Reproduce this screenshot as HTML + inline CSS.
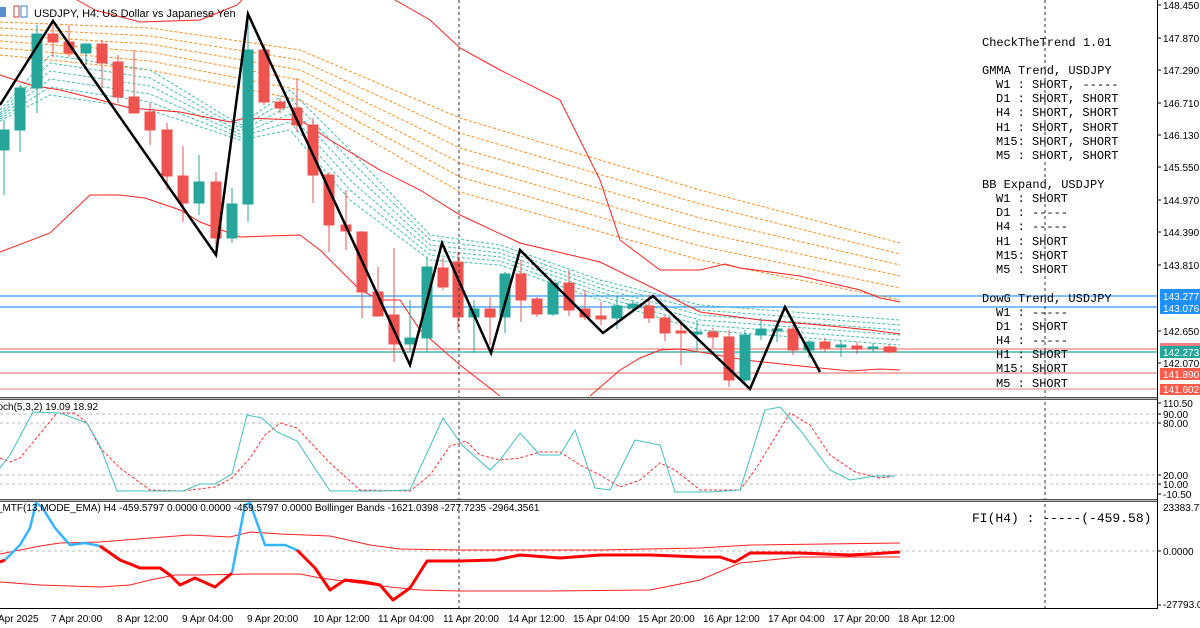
<!DOCTYPE html>
<html><head><meta charset="utf-8"><style>
html,body{margin:0;padding:0;background:#fff;width:1200px;height:628px;overflow:hidden}
svg{display:block}
.ax{font:10px "Liberation Sans",sans-serif;fill:#000}
.mono{font:12px "Liberation Mono",monospace;fill:#000}
</style></head><body>
<svg width="1200" height="628" viewBox="0 0 1200 628" xmlns="http://www.w3.org/2000/svg">
<rect width="1200" height="628" fill="#fff"/>
<line x1="0" y1="296" x2="1157" y2="296" stroke="#3399ff" stroke-width="1.2"/>
<line x1="0" y1="307" x2="1157" y2="307" stroke="#3399ff" stroke-width="1.2"/>
<line x1="0" y1="349" x2="1157" y2="349" stroke="#f08080" stroke-width="1.2"/>
<line x1="0" y1="352" x2="1157" y2="352" stroke="#26a69a" stroke-width="1.2"/>
<line x1="0" y1="373" x2="1157" y2="373" stroke="#f08080" stroke-width="1.2"/>
<line x1="0" y1="389" x2="1157" y2="389" stroke="#f4a6a0" stroke-width="1.5"/>
<g fill="none" stroke="#ff8c1a" stroke-width="1" stroke-dasharray="3,2">
<polyline points="0,22 150,28 300,50 460,118 700,190 900,243"/>
<polyline points="0,28 150,36 300,60 460,133 700,204 900,254"/>
<polyline points="0,35 150,44 300,70 460,148 700,218 900,265"/>
<polyline points="0,41 150,52 300,80 460,163 700,232 900,276"/>
<polyline points="0,48 150,61 300,90 460,177 700,246 900,288"/>
<polyline points="0,55 150,70 300,100 460,192 700,260 900,300"/>
</g>
<g fill="none" stroke="#3fbfb0" stroke-width="1" stroke-dasharray="3,2">
<polyline points="0,110 50,55 150,70 240,125 290,90 350,150 430,235 500,245 600,280 700,305 900,320"/>
<polyline points="0,113 50,63 150,78 240,128 290,98 350,160 430,240 500,249 600,284 700,310 900,325"/>
<polyline points="0,115 50,71 150,86 240,131 290,106 350,170 430,245 500,253 600,288 700,315 900,330"/>
<polyline points="0,117 50,79 150,94 240,134 290,114 350,180 430,250 500,257 600,292 700,320 900,335"/>
<polyline points="0,119 50,87 150,102 240,137 290,122 350,190 430,255 500,261 600,296 700,325 900,340"/>
<polyline points="0,121 50,95 150,110 240,140 290,130 350,200 430,260 500,265 600,300 700,330 900,345"/>
</g>
<g fill="none" stroke="#ff2020" stroke-width="1">
<polyline points="77,0 95,10 140,22 200,20 237,5 242,0"/>
<polyline points="395,0 430,20 460,48 500,70 560,100 600,180 620,240 660,270 700,270 725,264 740,268 800,276 860,290 880,298 900,302"/>
<polyline points="0,75 30,85 60,90 100,100 130,108 180,112 230,122 245,118 300,120 330,140 380,170 420,190 460,215 520,243 600,262 657,290 700,312 760,320 820,325 870,330 900,334"/>
<polyline points="0,252 50,233 90,195 120,195 145,198 180,210 200,222 240,237 300,235 320,250 360,290 380,300 400,300 420,330 460,365 500,396"/>
<polyline points="590,396 620,370 640,358 660,350 680,349 700,352 745,360 800,366 850,371 880,369 900,370"/>
</g>
<g stroke-width="1">
<g stroke="#26a69a" fill="#26a69a">
<line x1="4" y1="120" x2="4" y2="195"/><rect x="-1" y="130" width="10" height="20"/>
<line x1="20" y1="85" x2="20" y2="152"/><rect x="15" y="88" width="10" height="42"/>
<line x1="37" y1="25" x2="37" y2="113"/><rect x="32" y="34" width="10" height="54"/>
<line x1="86" y1="44" x2="86" y2="65"/><rect x="81" y="44" width="10" height="9"/>
<line x1="199" y1="155" x2="199" y2="215"/><rect x="194" y="182" width="10" height="21"/>
<line x1="232" y1="188" x2="232" y2="243"/><rect x="227" y="204" width="10" height="34"/>
<line x1="248" y1="14" x2="248" y2="222"/><rect x="243" y="50" width="10" height="154"/>
<line x1="410" y1="300" x2="410" y2="352"/><rect x="405" y="338" width="10" height="6"/>
<line x1="427" y1="257" x2="427" y2="352"/><rect x="422" y="267" width="10" height="71"/>
<line x1="474" y1="300" x2="474" y2="353"/><rect x="469" y="309" width="10" height="8"/>
<line x1="505" y1="272" x2="505" y2="333"/><rect x="500" y="274" width="10" height="43"/>
<line x1="553" y1="281" x2="553" y2="316"/><rect x="548" y="283" width="10" height="31"/>
<line x1="617" y1="296" x2="617" y2="329"/><rect x="612" y="306" width="10" height="12"/>
<line x1="633" y1="300" x2="633" y2="310"/><rect x="628" y="304" width="10" height="4"/>
<line x1="697" y1="320" x2="697" y2="352"/><rect x="692" y="332" width="10" height="2"/>
<line x1="745" y1="330" x2="745" y2="386"/><rect x="740" y="335" width="10" height="45"/>
<line x1="761" y1="318" x2="761" y2="340"/><rect x="756" y="329" width="10" height="6"/>
<line x1="777" y1="320" x2="777" y2="342"/><rect x="772" y="329" width="10" height="2"/>
<line x1="809" y1="340" x2="809" y2="358"/><rect x="804" y="342" width="10" height="8"/>
<line x1="841" y1="340" x2="841" y2="357"/><rect x="836" y="345" width="10" height="2"/>
<line x1="873" y1="343" x2="873" y2="352"/><rect x="868" y="347" width="10" height="1.5"/>
</g>
<g stroke="#ef5350" fill="#ef5350">
<line x1="53" y1="25" x2="53" y2="57"/><rect x="48" y="34" width="10" height="8"/>
<line x1="69" y1="25" x2="69" y2="57"/><rect x="64" y="42" width="10" height="11"/>
<line x1="102" y1="40" x2="102" y2="88"/><rect x="97" y="44" width="10" height="19"/>
<line x1="118" y1="55" x2="118" y2="103"/><rect x="113" y="62" width="10" height="35"/>
<line x1="134" y1="50" x2="134" y2="113"/><rect x="129" y="97" width="10" height="16"/>
<line x1="150" y1="103" x2="150" y2="145"/><rect x="145" y="112" width="10" height="18"/>
<line x1="167" y1="123" x2="167" y2="190"/><rect x="162" y="130" width="10" height="46"/>
<line x1="183" y1="146" x2="183" y2="222"/><rect x="178" y="176" width="10" height="27"/>
<line x1="216" y1="172" x2="216" y2="248"/><rect x="211" y="182" width="10" height="56"/>
<line x1="264" y1="45" x2="264" y2="105"/><rect x="259" y="50" width="10" height="52"/>
<line x1="280" y1="98" x2="280" y2="113"/><rect x="275" y="102" width="10" height="6"/>
<line x1="297" y1="78" x2="297" y2="132"/><rect x="292" y="108" width="10" height="17"/>
<line x1="313" y1="118" x2="313" y2="203"/><rect x="308" y="125" width="10" height="50"/>
<line x1="329" y1="172" x2="329" y2="252"/><rect x="324" y="175" width="10" height="50"/>
<line x1="346" y1="190" x2="346" y2="250"/><rect x="341" y="225" width="10" height="6"/>
<line x1="362" y1="231" x2="362" y2="318"/><rect x="357" y="232" width="10" height="60"/>
<line x1="378" y1="267" x2="378" y2="316"/><rect x="373" y="292" width="10" height="24"/>
<line x1="394" y1="248" x2="394" y2="362"/><rect x="389" y="315" width="10" height="29"/>
<line x1="443" y1="258" x2="443" y2="290"/><rect x="438" y="268" width="10" height="19"/>
<line x1="458" y1="252" x2="458" y2="330"/><rect x="453" y="262" width="10" height="55"/>
<line x1="490" y1="297" x2="490" y2="345"/><rect x="485" y="309" width="10" height="8"/>
<line x1="521" y1="260" x2="521" y2="322"/><rect x="516" y="274" width="10" height="26"/>
<line x1="537" y1="297" x2="537" y2="317"/><rect x="532" y="299" width="10" height="15"/>
<line x1="569" y1="270" x2="569" y2="316"/><rect x="564" y="283" width="10" height="27"/>
<line x1="585" y1="290" x2="585" y2="320"/><rect x="580" y="309" width="10" height="8"/>
<line x1="601" y1="302" x2="601" y2="325"/><rect x="596" y="316" width="10" height="3"/>
<line x1="649" y1="295" x2="649" y2="323"/><rect x="644" y="306" width="10" height="12"/>
<line x1="665" y1="315" x2="665" y2="341"/><rect x="660" y="318" width="10" height="15"/>
<line x1="681" y1="320" x2="681" y2="365"/><rect x="676" y="331" width="10" height="2"/>
<line x1="713" y1="328" x2="713" y2="348"/><rect x="708" y="332" width="10" height="5"/>
<line x1="729" y1="330" x2="729" y2="387"/><rect x="724" y="337" width="10" height="43"/>
<line x1="793" y1="325" x2="793" y2="355"/><rect x="788" y="329" width="10" height="21"/>
<line x1="825" y1="338" x2="825" y2="352"/><rect x="820" y="342" width="10" height="6"/>
<line x1="857" y1="342" x2="857" y2="354"/><rect x="852" y="346" width="10" height="3"/>
<line x1="889" y1="344" x2="889" y2="353"/><rect x="884" y="347" width="12" height="5"/>
</g>
</g>
<polyline points="0,105 53,21 216,255 248,14 410,365 442,243 491,353 520,250 603,333 653,296 750,389 785,307 820,372" fill="none" stroke="#000" stroke-width="2.5" stroke-linejoin="miter"/>
<rect x="0" y="7" width="6" height="10" fill="#5a8fd0"/>
<rect x="14" y="6" width="5" height="11" fill="none" stroke="#d04040"/>
<rect x="21" y="6" width="6" height="11" fill="none" stroke="#3a7fd0"/>
<text x="34" y="17" style="font:11px 'Liberation Sans',sans-serif" fill="#000">USDJPY, H4: US Dollar vs Japanese Yen</text>
<g class="mono">
<text x="982" y="46">CheckTheTrend 1.01</text>
<text x="982" y="74">GMMA Trend, USDJPY</text>
<text x="996" y="88">W1 : SHORT, -----</text>
<text x="996" y="102">D1 : SHORT, SHORT</text>
<text x="996" y="116">H4 : SHORT, SHORT</text>
<text x="996" y="131">H1 : SHORT, SHORT</text>
<text x="996" y="145">M15: SHORT, SHORT</text>
<text x="996" y="159">M5 : SHORT, SHORT</text>
<text x="982" y="188">BB Expand, USDJPY</text>
<text x="996" y="202">W1 : SHORT</text>
<text x="996" y="216">D1 : -----</text>
<text x="996" y="230">H4 : -----</text>
<text x="996" y="245">H1 : SHORT</text>
<text x="996" y="259">M15: SHORT</text>
<text x="996" y="273">M5 : SHORT</text>
<text x="982" y="302">DowG Trend, USDJPY</text>
<text x="996" y="316">W1 : -----</text>
<text x="996" y="330">D1 : SHORT</text>
<text x="996" y="344">H4 : -----</text>
<text x="996" y="358">H1 : SHORT</text>
<text x="996" y="372">M15: SHORT</text>
<text x="996" y="387">M5 : SHORT</text>
<text x="972" y="522" style="font:13px 'Liberation Mono',monospace">FI(H4)  : -----(-459.58)</text>
</g>
<line x1="459" y1="0" x2="459" y2="608" stroke="#333" stroke-dasharray="3,3"/>
<line x1="1045" y1="0" x2="1045" y2="608" stroke="#333" stroke-dasharray="3,3"/>
<rect x="0" y="397" width="1158" height="1" fill="#555"/>
<rect x="0" y="398" width="1158" height="1" fill="#bbb"/>
<rect x="0" y="399" width="1158" height="1" fill="#555"/>
<rect x="0" y="499" width="1158" height="1" fill="#555"/>
<rect x="0" y="500" width="1158" height="1" fill="#bbb"/>
<rect x="0" y="501" width="1158" height="1" fill="#555"/>
<g stroke="#bbb" stroke-dasharray="3,3">
<line x1="0" y1="414" x2="1157" y2="414"/><line x1="0" y1="423" x2="1157" y2="423"/>
<line x1="0" y1="475" x2="1157" y2="475"/><line x1="0" y1="484" x2="1157" y2="484"/>
<line x1="0" y1="551" x2="1157" y2="551"/>
</g>
<polyline fill="none" stroke="#ff3030" stroke-dasharray="3,2" points="0,458 10,462 20,458 57,413 75,413 87,423 100,448 120,468 150,490 183,491 215,487 232,478 250,458 265,435 280,423 297,428 330,463 360,490 410,491 430,475 450,446 466,441 480,455 500,460 520,458 540,452 560,452 580,465 600,475 620,487 640,480 660,463 675,470 700,490 740,490 755,470 790,413 810,425 830,455 855,472 880,478 895,476"/>
<polyline fill="none" stroke="#40c0c0" points="0,468 10,455 33,412 60,413 87,423 100,446 117,491 150,491 183,491 200,484 215,484 232,474 247,415 262,418 277,432 297,441 330,491 380,491 410,490 443,418 462,445 490,470 500,460 520,433 540,455 560,455 575,430 595,488 610,490 635,440 660,445 675,492 710,492 740,490 765,410 780,407 800,430 830,470 850,480 875,476 895,476"/>
<text x="-12" y="410" style="font:10px 'Liberation Sans',sans-serif">Stoch(5,3,2) 19.09 18.92</text>
<g fill="none" stroke="#ff2020" stroke-width="1">
<polyline points="0,554 40,546 60,543 100,542 150,538 190,535 230,537 250,532 280,534 330,536 370,545 400,549 460,550 500,550 600,550 700,548 750,545 900,543"/>
<polyline points="0,582 40,585 100,587 130,585 150,580 175,575 200,575 250,574 300,574 320,578 390,587 420,590 460,591 550,591 650,590 700,580 740,563 800,557 900,557"/>
</g>
<polyline fill="none" stroke="#ff0000" stroke-width="3" points="0,562 5,560"/>
<polyline fill="none" stroke="#33b5ff" stroke-width="2.5" points="5,560 20,545 30,528 36,503 42,507 55,528 70,545 85,543 100,546"/>
<polyline fill="none" stroke="#ff0000" stroke-width="3" stroke-linejoin="round" points="100,546 120,560 140,568 160,568 170,575 180,585 195,578 215,587 232,573"/>
<polyline fill="none" stroke="#33b5ff" stroke-width="2.5" points="232,573 245,505 250,503 265,545 285,545 297,550"/>
<polyline fill="none" stroke="#ff0000" stroke-width="3" stroke-linejoin="round" points="297,550 315,568 330,590 345,580 365,582 380,585 393,600 410,588 427,561 460,561 495,560 520,555 560,558 600,555 650,555 700,557 720,557 735,562 750,553 800,553 850,555 870,554 900,552"/>
<text x="-12" y="511" style="font:10px 'Liberation Sans',sans-serif">FI_MTF(13,MODE_EMA) H4 -459.5797 0.0000 0.0000 -459.5797 0.0000 Bollinger Bands -1621.0398 -277.7235 -2964.3561</text>
<rect x="1157" y="0" width="43" height="628" fill="#fff"/>
<line x1="1157.5" y1="0" x2="1157.5" y2="609" stroke="#000"/>
<line x1="0" y1="608.5" x2="1158" y2="608.5" stroke="#000"/>
<g class="ax">
<g stroke="#000">
<line x1="1157" y1="5" x2="1161" y2="5"/><line x1="1157" y1="38" x2="1161" y2="38"/><line x1="1157" y1="70" x2="1161" y2="70"/>
<line x1="1157" y1="103" x2="1161" y2="103"/><line x1="1157" y1="135" x2="1161" y2="135"/><line x1="1157" y1="167" x2="1161" y2="167"/>
<line x1="1157" y1="200" x2="1161" y2="200"/><line x1="1157" y1="232" x2="1161" y2="232"/><line x1="1157" y1="265" x2="1161" y2="265"/>
<line x1="1157" y1="331" x2="1161" y2="331"/><line x1="1157" y1="363" x2="1161" y2="363"/>
<line x1="1157" y1="403" x2="1161" y2="403"/><line x1="1157" y1="414" x2="1161" y2="414"/><line x1="1157" y1="423" x2="1161" y2="423"/>
<line x1="1157" y1="475" x2="1161" y2="475"/><line x1="1157" y1="484" x2="1161" y2="484"/><line x1="1157" y1="494" x2="1161" y2="494"/>
<line x1="1157" y1="551" x2="1161" y2="551"/><line x1="1157" y1="605" x2="1161" y2="605"/>
</g>
<text x="1163" y="9">148.450</text><text x="1163" y="42">147.870</text><text x="1163" y="74">147.290</text>
<text x="1163" y="107">146.710</text><text x="1163" y="139">146.130</text><text x="1163" y="171">145.550</text>
<text x="1163" y="204">144.970</text><text x="1163" y="236">144.390</text><text x="1163" y="269">143.810</text>
<text x="1163" y="335">142.650</text><text x="1163" y="367">142.070</text>
<rect x="1160" y="289" width="40" height="13" fill="#1e90ff"/><rect x="1160" y="302" width="40" height="12" fill="#1e90ff"/>
<text x="1163" y="300" fill="#fff">143.277</text><text x="1163" y="312" fill="#fff">143.076</text>
<rect x="1160" y="343" width="40" height="3" fill="#f08080"/>
<rect x="1160" y="346" width="40" height="12" fill="#26a69a"/><text x="1163" y="356" fill="#fff">142.273</text>
<rect x="1160" y="368" width="40" height="12" fill="#ff5a4a"/><text x="1163" y="378" fill="#fff">141.890</text>
<rect x="1160" y="384" width="40" height="11" fill="#ff5a4a"/><text x="1163" y="393" fill="#fff">141.602</text>
<text x="1163" y="407">110.50</text><text x="1163" y="418">90.00</text><text x="1163" y="427">80.00</text>
<text x="1163" y="479">20.00</text><text x="1163" y="488">10.00</text><text x="1163" y="498">-10.50</text>
<text x="1163" y="511">23383.77</text><text x="1163" y="555">0.0000</text><text x="1163" y="608">-27793.0</text>
</g>
<g class="ax">
<text x="-2" y="622">Apr 2025</text><text x="51" y="622">7 Apr 20:00</text><text x="117" y="622">8 Apr 12:00</text>
<text x="182" y="622">9 Apr 04:00</text><text x="247" y="622">9 Apr 20:00</text><text x="313" y="622">10 Apr 12:00</text>
<text x="378" y="622">11 Apr 04:00</text><text x="443" y="622">11 Apr 20:00</text><text x="508" y="622">14 Apr 12:00</text>
<text x="573" y="622">15 Apr 04:00</text><text x="638" y="622">15 Apr 20:00</text><text x="703" y="622">16 Apr 12:00</text>
<text x="768" y="622">17 Apr 04:00</text><text x="833" y="622">17 Apr 20:00</text><text x="898" y="622">18 Apr 12:00</text>
</g>
</svg>
</body></html>
